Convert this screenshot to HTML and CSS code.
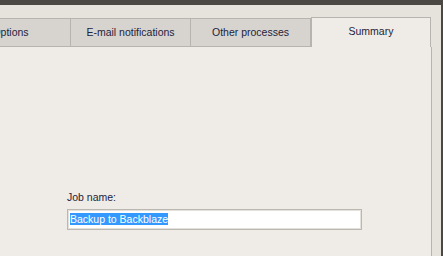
FILE: index.html
```html
<!DOCTYPE html>
<html>
<head>
<meta charset="utf-8">
<link rel="stylesheet" href="styles.css">
</head>
<body>
<div class="window">
  <div class="titlebar"></div>
  <div class="client">
    <div class="tabview">
      <div class="tabstrip">
        <div class="tab">Options</div>
        <div class="tab">E-mail notifications</div>
        <div class="tab">Other processes</div>
        <div class="tab active">Summary</div>
      </div>
      <div class="page">
        <div class="field">
          <div class="label">Job name:</div>
          <div class="textbox"><span class="sel">Backup to Backblaze</span></div>
        </div>
      </div>
    </div>
  </div>
</div>
</body>
</html>
```

FILE: styles.css
```css
html, body {
  margin: 0;
  padding: 0;
  overflow: hidden;
}
body {
  width: 443px;
  height: 256px;
  font-family: "Liberation Sans", Arial, sans-serif;
  font-size: 10.5px;
  color: #23233a;
}
.window {
  box-sizing: border-box;
  width: 443px;
  height: 256px;
  display: flex;
  flex-direction: column;
  border-right: 2px solid #4b4843;
  background: #e6e2dc;
  overflow: hidden;
}
.titlebar {
  height: 5px;
  background: #4b4843;
  flex: none;
}
.client {
  flex: 1;
  display: flex;
  padding: 12px 9px 0 0;
  min-height: 0;
}
.tabview {
  flex: 1;
  display: flex;
  flex-direction: column;
  margin-left: -49px;
}
.tabstrip {
  display: flex;
  align-items: flex-end;
  margin-right: 1px;
  flex: none;
}
.tab {
  box-sizing: border-box;
  width: 120px;
  height: 29px;
  padding-top: 7px;
  line-height: 13px;
  text-align: center;
  background: #d7d3cf;
  border-top: 1px solid #b7b4b0;
  border-bottom: 1px solid #b7b4b0;
  border-right: 1px solid #b7b4b0;
  white-space: nowrap;
}
.tab.active {
  height: 30px;
  background: #efebe6;
  border-left: 1px solid #b7b4b0;
  border-right: 1px solid #b7b4b0;
  border-bottom: none;
}
.page {
  flex: 1;
  background: #efebe6;
  border-right: 1px solid #b7b4b0;
  padding: 144px 0 0 116px;
}
.field {
  width: 295px;
}
.label {
  line-height: 13px;
  margin-bottom: 5px;
}
.textbox {
  box-sizing: border-box;
  height: 21px;
  background: #fff;
  border: 1px solid #bbb7b1;
  box-shadow: inset 0 0 0 1px #e4e1dc;
  padding: 3px 0 0 2px;
  line-height: 13px;
  white-space: nowrap;
}
.sel {
  background: #3399ff;
  color: #fff;
  display: inline-block;
  line-height: 12px;
}
```
